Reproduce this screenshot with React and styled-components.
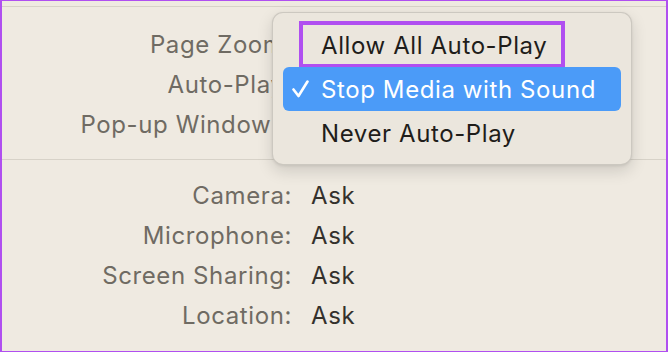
import React from "react";
import styled, { createGlobalStyle } from "styled-components";

const GlobalStyle = createGlobalStyle`
  html, body {
    margin: 0;
    padding: 0;
    background: #efeae1;
  }
  body {
    font-family: Inter, "Open Sans", "Liberation Sans", sans-serif;
  }
`;

const Frame = styled.div`
  position: relative;
  box-sizing: border-box;
  width: 668px;
  height: 352px;
  overflow: hidden;
  background: #efeae1;
  border: 1px solid #b04ff0;
  border-right-width: 2px;
  border-left-width: 2px;
`;

const Rule = styled.div`
  height: 1px;
  margin-top: ${(p) => p.$top || 0}px;
  background: #d7d2c8;
`;

const Section = styled.div`
  display: grid;
  grid-template-columns: 290px 1fr;
  column-gap: 19px;
  grid-auto-rows: 40px;
  padding-top: ${(p) => p.$top || 0}px;
  align-items: center;
`;

const Label = styled.div`
  text-align: right;
  font-size: 24px;
  letter-spacing: 0.6px;
  color: #6f6b63;
  white-space: nowrap;
`;

const Value = styled.div`
  font-size: 24px;
  letter-spacing: 0.6px;
  color: #34312c;
`;

const Menu = styled.div`
  position: absolute;
  left: 270px;
  top: 11px;
  width: 360px;
  box-sizing: border-box;
  padding: 10px 10px 9px;
  background: #ebe6dd;
  border: 1px solid rgba(0, 0, 0, 0.13);
  border-radius: 11px;
  box-shadow: 0 6px 16px rgba(0, 0, 0, 0.14), 0 1px 3px rgba(0, 0, 0, 0.08);
`;

const Item = styled.div`
  position: relative;
  display: flex;
  align-items: center;
  height: 44px;
  padding-left: 38px;
  border-radius: 6px;
  font-size: 24px;
  letter-spacing: 0.6px;
  color: ${(p) => (p.$active ? "#ffffff" : "#1f1d1a")};
  background: ${(p) => (p.$active ? "#4b9bf8" : "transparent")};
`;

const Check = styled.svg`
  position: absolute;
  left: 9px;
  top: 13px;
  width: 17px;
  height: 18px;
`;

const Highlight = styled.div`
  position: absolute;
  left: 16px;
  top: -2px;
  width: 266px;
  height: 47px;
  box-sizing: border-box;
  border: 4px solid #b04ff0;
`;

const topRows = ["Page Zoom:", "Auto-Play:", "Pop-up Windows:"];
const bottomRows = [
  ["Camera:", "Ask"],
  ["Microphone:", "Ask"],
  ["Screen Sharing:", "Ask"],
  ["Location:", "Ask"],
];

export default function App() {
  return (
    <>
      <GlobalStyle />
      <Frame>
        <Rule $top={5} />
        <Section $top={17}>
          {topRows.map((label) => (
            <React.Fragment key={label}>
              <Label>{label}</Label>
              <Value />
            </React.Fragment>
          ))}
        </Section>
        <Rule $top={15} />
        <Section $top={15}>
          {bottomRows.map(([label, value]) => (
            <React.Fragment key={label}>
              <Label>{label}</Label>
              <Value>{value}</Value>
            </React.Fragment>
          ))}
        </Section>

        <Menu>
          <Item>
            <Highlight />
            Allow All Auto-Play
          </Item>
          <Item $active>
            <Check viewBox="0 0 17 18">
              <path
                d="M1.5 9.5 L6.5 16 L15.5 1.5"
                fill="none"
                stroke="#ffffff"
                strokeWidth="2.6"
                strokeLinecap="round"
                strokeLinejoin="round"
              />
            </Check>
            Stop Media with Sound
          </Item>
          <Item>Never Auto-Play</Item>
        </Menu>
      </Frame>
    </>
  );
}
